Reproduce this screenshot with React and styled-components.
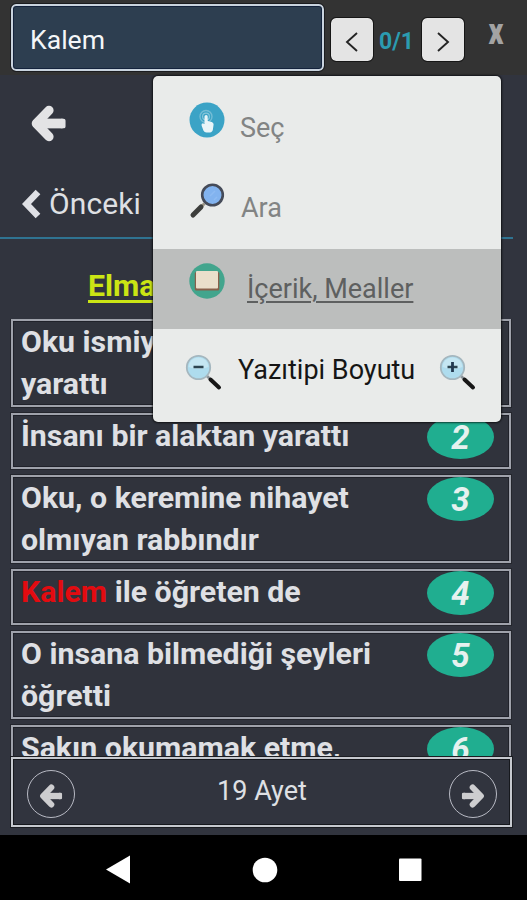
import React, { useState } from "react";
import styled, { createGlobalStyle } from "styled-components";

const GlobalStyle = createGlobalStyle`
  * {
    box-sizing: border-box;
  }

  body {
    margin: 0;
    background: #000;
    font-family: Roboto, "Noto Sans", sans-serif;
  }
`;

const Phone = styled.div`
  display: flex;
  flex-direction: column;
  width: 527px;
  height: 900px;
  overflow: hidden;
`;

const Screen = styled.div`
  position: relative;
  display: flex;
  flex-direction: column;
  height: 835px;
  background: #31343e;
  color: #dfe0e4;
`;

const TopBar = styled.header`
  display: flex;
  flex: none;
  height: 75px;
  padding: 4px 0 0 11px;
  background: #333;
`;

const SearchInput = styled.input`
  width: 313px;
  height: 67px;
  padding: 3px 17px 0;
  border: 2px solid #c9d3de;
  border-radius: 5px;
  outline: 1px solid #1b1c1f;
  background: #2d3e50;
  box-shadow: inset 0 0 0 1px #14233c;
  color: #f4f6f8;
  font-family: inherit;
  font-size: 26.6px;
`;

const StepButton = styled.button`
  display: flex;
  align-items: center;
  justify-content: center;
  width: 42px;
  height: 43px;
  margin: 14px 0 0 ${(props) => props.$gap}px;
  padding: 4px 0 0;
  border: 0;
  border-radius: 5px;
  outline: 1px solid #161616;
  background: #e4e4e4;
`;

const Counter = styled.span`
  width: 34px;
  margin: 24px 0 0 6px;
  color: #2b9bb0;
  font-size: 23px;
  font-weight: 700;
  line-height: 28px;
  white-space: nowrap;
`;

const CloseButton = styled.button`
  width: 20px;
  height: 36px;
  margin: 9px 0 0 22px;
  padding: 0;
  border: 0;
  background: none;
  color: #a3a3a3;
  font-family: inherit;
  font-size: 29px;
  font-weight: 900;
  line-height: 32px;
  transform: scaleY(1.25);
`;

const PageHead = styled.div`
  flex: none;
  width: 513px;
  height: 164px;
  padding: 30px 0 0 22px;
  border-bottom: 2px solid #2f7391;
`;

const BackIcon = styled.div`
  height: 38px;
  margin-left: 8px;
`;

const PreviousLink = styled.div`
  display: flex;
  align-items: center;
  margin-top: 43px;
  font-size: 30px;
  line-height: 36px;
  letter-spacing: 0.1px;

  svg {
    margin: 0 8px 0 0;
  }
`;

const Translator = styled.h2`
  flex: none;
  height: 80px;
  margin: 0;
  padding: 29px 0 0 88px;
  color: #cbe514;
  font-size: 30.3px;
  font-weight: 700;
  line-height: 36px;
  text-decoration: underline;
  text-decoration-thickness: 3px;
  text-underline-offset: 4px;
  text-decoration-skip-ink: none;
`;

const VerseList = styled.div`
  display: flex;
  flex: 1;
  flex-direction: column;
  gap: 6px;
  min-height: 0;
  padding: 0 16px 0 11px;
  overflow: hidden;
`;

const Verse = styled.div`
  display: flex;
  flex: none;
  justify-content: space-between;
  min-height: 56px;
  padding: 0 15px 0 8px;
  border: 2px solid #9fa2ab;
  background: #30333c;
  box-shadow: 0 0 0 1px #24262d, inset 0 0 0 1px #20222a;
`;

const VerseText = styled.p`
  width: 372px;
  margin: 0;
  font-size: 30.3px;
  font-weight: 700;
  line-height: 42px;
`;

const Match = styled.mark`
  background: none;
  color: #e30b10;
`;

const VerseNumber = styled.span`
  flex: none;
  width: 67px;
  height: 44px;
  border-radius: 50%;
  background: #20ae90;
  color: #e6f1ef;
  font-size: 33px;
  font-style: italic;
  font-weight: 700;
  line-height: 46px;
  text-align: center;
`;

const Footer = styled.footer`
  display: flex;
  flex: none;
  align-items: center;
  justify-content: space-between;
  height: 70px;
  margin: 0 15px 8px 11px;
  padding: 4px 13px 0 14px;
  border: 2px solid #c6c9cf;
  background: #31343e;
  box-shadow: 0 0 0 1px #1b1d22, inset 0 0 0 1px #16181d;
  font-size: 27px;
`;

const FooterLabel = styled.span`
  padding-bottom: 6px;
`;

const RoundButton = styled.button`
  display: flex;
  align-items: center;
  justify-content: center;
  width: 48px;
  height: 48px;
  padding: 3px 0 0;
  border: 1.5px solid #b8bac4;
  border-radius: 50%;
  background: none;
`;

const Menu = styled.div`
  position: absolute;
  top: 76px;
  left: 153px;
  width: 348px;
  height: 346px;
  border-radius: 5px;
  overflow: hidden;
  background: #e9ebea;
  box-shadow: 0 0 2px 1px rgba(0, 0, 0, 0.65);
  color: #828484;
  font-size: 27px;
`;

const MenuItem = styled.div`
  display: flex;
  align-items: flex-start;
  height: ${(props) => props.$height}px;
  padding: ${(props) => props.$top}px 0 0 ${(props) => props.$left || 36}px;
  background: ${(props) => (props.$active ? "#bcbebd" : "none")};
  color: ${(props) => (props.$active ? "#5e6060" : "inherit")};

  svg {
    flex: none;
  }
`;

const MenuLabel = styled.span`
  margin: ${(props) => props.$drop}px 0 0 ${(props) => props.$gap}px;
  color: ${(props) => (props.$dark ? "#151515" : "inherit")};
  line-height: 32px;
  white-space: nowrap;
  text-decoration: ${(props) => (props.$underline ? "underline" : "none")};
  text-decoration-thickness: 2px;
  text-underline-offset: 3px;
`;

const ZoomInSlot = styled.span`
  display: flex;
  margin-left: 24px;
`;

const NavBar = styled.nav`
  display: flex;
  flex: none;
  align-items: center;
  justify-content: space-between;
  height: 65px;
  padding: 4px 105px 0 105px;
  background: #000;
`;

const ArrowIcon = ({ size, color, right }) => (
  <svg
    width={size}
    height={size}
    viewBox="0 0 37 38"
    fill={color}
    stroke={color}
    transform={right ? "scale(-1 1)" : undefined}
  >
    <path
      d="M19 5.500L6 19L19 32.500"
      fill="none"
      strokeWidth="9.500"
      strokeLinejoin="round"
      strokeLinecap="round"
    />
    <path d="M9 19H33" strokeWidth="10" />
    <rect x="31" y="15" width="4" height="8" rx="1" strokeWidth="2" />
  </svg>
);

const Caret = ({ right }) => (
  <svg width="14" height="20" viewBox="0 0 14 20" fill="none" stroke="#242424" strokeWidth="1.9">
    <path d={right ? "M2 1L12 10L2 19" : "M12 1L2 10L12 19"} />
  </svg>
);

const TouchIcon = () => (
  <svg width="36" height="36" viewBox="0 0 36 36">
    <circle cx="18" cy="18" r="17.5" fill="#3ba3c6" />
    <circle cx="17" cy="14.5" r="6" fill="none" stroke="#74bdd5" strokeWidth="1.4" />
    <circle cx="17" cy="14.5" r="3.4" fill="none" stroke="#86c6da" strokeWidth="1.2" />
    <path
      d="M15.5 14.5a1.6 1.6 0 0 1 3.2 0V19l4 1q2 .6 1.9 2.6l-.7 5q-.4 2.8-3 2.8h-3.5q-2 0-3-2l-1.8-5q-.5-2 1.2-2.2l1.7.8z"
      fill="#e9f5f8"
    />
  </svg>
);

const SearchIcon = () => (
  <svg width="36" height="36" viewBox="0 0 36 36">
    <path d="M15.5 20.5L10 26" stroke="#9c9686" strokeWidth="3" />
    <path d="M12 24L4 32" stroke="#3d3e3c" strokeWidth="5" strokeLinecap="round" />
    <circle cx="23.5" cy="12" r="10.3" fill="#82b3ef" stroke="#454b59" strokeWidth="2.6" />
    <path d="M21 13L26 8M25 17L28 14" stroke="#8ebbf2" strokeWidth="1.5" />
  </svg>
);

const BookIcon = () => (
  <svg width="36" height="36" viewBox="0 0 36 36">
    <circle cx="18" cy="18" r="17.7" fill="#42a58d" />
    <rect x="5.800" y="9" width="24.500" height="18.500" rx="1.500" fill="#88604b" />
    <rect x="7" y="8" width="22" height="17.500" rx="1" fill="#eadfcb" />
  </svg>
);

const LensIcon = ({ plus }) => (
  <svg width="38" height="38" viewBox="0 0 38 38">
    <path d="M22 22L27 27" stroke="#8a9298" strokeWidth="2.6" />
    <path d="M25.500 25.500L34 33.500" stroke="#171717" strokeWidth="4" strokeLinecap="round" />
    <circle cx="13.500" cy="13.500" r="11.700" fill="#aedcee" stroke="#a5b7bf" strokeWidth="1.800" />
    <path d="M3.500 13a10 9.500 0 0 1 20 0q-10 4-20 0z" fill="#c5e6f2" />
    <path d="M8.500 13H18.500" stroke="#2d4450" strokeWidth="2.400" />
    {plus && <path d="M13.500 8V18" stroke="#22384f" strokeWidth="2.800" />}
  </svg>
);

const verses = [
  { no: 1, text: "Oku ismiyle o rabbının ki yarattı" },
  { no: 2, text: "İnsanı bir alaktan yarattı" },
  { no: 3, text: "Oku, o keremine nihayet olmıyan rabbındır" },
  { no: 4, match: "Kalem", text: " ile öğreten de" },
  { no: 5, text: "O insana bilmediği şeyleri öğretti" },
  { no: 6, text: "Sakın okumamak etme," },
];

const App = () => {
  const [query, setQuery] = useState("Kalem");

  return (
    <>
      <GlobalStyle />
      <Phone>
        <Screen>
          <TopBar>
            <SearchInput value={query} onChange={(e) => setQuery(e.target.value)} />
            <StepButton $gap={7}>
              <Caret />
            </StepButton>
            <Counter>0/1</Counter>
            <StepButton $gap={9}>
              <Caret right />
            </StepButton>
            <CloseButton>x</CloseButton>
          </TopBar>

          <PageHead>
            <BackIcon>
              <ArrowIcon size={37} color="#e3e3e5" />
            </BackIcon>
            <PreviousLink>
              <svg width="19" height="30" viewBox="0 0 19 30" fill="none" stroke="#dfe0e5" strokeWidth="6.500">
                <path d="M16 3L4.500 15L16 27" />
              </svg>
              Önceki
            </PreviousLink>
          </PageHead>
          <Translator>Elmalılı</Translator>

          <VerseList>
            {verses.map((verse) => (
              <Verse key={verse.no}>
                <VerseText>
                  {verse.match && <Match>{verse.match}</Match>}
                  {verse.text}
                </VerseText>
                <VerseNumber>{verse.no}</VerseNumber>
              </Verse>
            ))}
          </VerseList>

          <Footer>
            <RoundButton>
              <ArrowIcon size={24} color="#cdcdcf" />
            </RoundButton>
            <FooterLabel>19 Ayet</FooterLabel>
            <RoundButton>
              <ArrowIcon size={24} color="#cdcdcf" right />
            </RoundButton>
          </Footer>

          <Menu>
            <MenuItem $height={92} $top={26}>
              <TouchIcon />
              <MenuLabel $gap={15} $drop={10}>Seç</MenuLabel>
            </MenuItem>
            <MenuItem $height={81} $top={15}>
              <SearchIcon />
              <MenuLabel $gap={16} $drop={9}>Ara</MenuLabel>
            </MenuItem>
            <MenuItem $height={80} $top={14} $active>
              <BookIcon />
              <MenuLabel $gap={22} $drop={10} $underline>İçerik, Mealler</MenuLabel>
            </MenuItem>
            <MenuItem $height={93} $top={25} $left={32}>
              <LensIcon />
              <MenuLabel $gap={15} $drop={0} $dark>Yazıtipi Boyutu</MenuLabel>
              <ZoomInSlot>
                <LensIcon plus />
              </ZoomInSlot>
            </MenuItem>
          </Menu>
        </Screen>

        <NavBar>
          <svg width="26" height="30" viewBox="0 0 26 30">
            <path d="M1 14.500L25 0.500V28.500Z" fill="#fff" />
          </svg>
          <svg width="26" height="26" viewBox="0 0 26 26">
            <circle cx="13" cy="13" r="12.300" fill="#fff" />
          </svg>
          <svg width="24" height="24" viewBox="0 0 24 24">
            <rect x="1" y="0.500" width="22.500" height="22.500" rx="1" fill="#fff" />
          </svg>
        </NavBar>
      </Phone>
    </>
  );
};

export default App;
